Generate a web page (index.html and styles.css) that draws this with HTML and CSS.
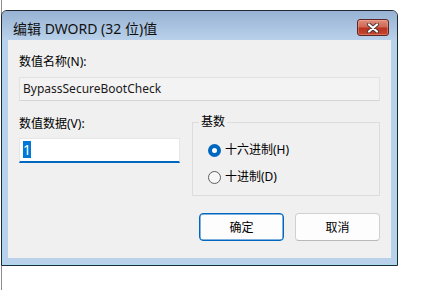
FILE: index.html
```html
<!DOCTYPE html>
<html lang="zh-CN">
<head>
<meta charset="utf-8">
<title>编辑 DWORD (32 位)值</title>
<link rel="stylesheet" href="styles.css">
</head>
<body>
<div class="desk">
  <div class="window">
    <div class="titlebar">
      <span class="title">编辑 DWORD (32 位)值</span>
      <button class="close" aria-label="关闭">
        <svg width="12" height="10" viewBox="0 0 12 10">
          <path d="M2 1.5 L10 8.5 M10 1.5 L2 8.5" stroke="#4a3434" stroke-width="4" stroke-linecap="round"/>
          <path d="M2 1.5 L10 8.5 M10 1.5 L2 8.5" stroke="#ffffff" stroke-width="2.2" stroke-linecap="round"/>
        </svg>
      </button>
    </div>
    <div class="client">
      <div class="label first">数值名称(N):</div>
      <div class="namebox">BypassSecureBootCheck</div>
      <div class="row">
        <div class="leftcol">
          <div class="label">数值数据(V):</div>
          <div class="valuebox"><span class="sel">1</span></div>
        </div>
        <fieldset class="group">
          <legend>基数</legend>
          <label class="radio"><span class="dot checked"></span>十六进制(H)</label>
          <label class="radio"><span class="dot"></span>十进制(D)</label>
        </fieldset>
      </div>
      <div class="buttons">
        <button class="btn primary">确定</button>
        <button class="btn">取消</button>
      </div>
    </div>
  </div>
</div>
</body>
</html>
```
FILE: styles.css
```css
html, body {
  margin: 0;
  padding: 0;
  background: #ffffff;
}
body {
  width: 444px;
  height: 290px;
  overflow: hidden;
  font-family: "Noto Sans", "Noto Sans CJK SC", sans-serif;
  font-size: 12px;
  color: #000;
}
.desk {
  height: 290px;
  margin-left: 1px;
  border-left: 1px solid #8c8c8c;
  padding-top: 10px;
  box-sizing: border-box;
}
.window {
  margin-left: -1px;
  width: 397px;
  height: 256px;
  box-sizing: border-box;
  border: 1px solid #1f2a33;
  border-radius: 6px 6px 0 0;
  background: #b9d1ea;
  box-shadow: inset 0 0 0 1px #a6dcef;
  padding: 0 6px 7px 6px;
  display: flex;
  flex-direction: column;
}
.titlebar {
  margin: 0 -6px;
  height: 29px;
  padding: 0 8px 0 11px;
  border-radius: 5px 5px 0 0;
  background: linear-gradient(#97b2d3, #b9d1ea);
  display: flex;
  align-items: flex-start;
  justify-content: space-between;
}
.title {
  font-size: 14px;
  line-height: 20px;
  padding-top: 8px;
  color: #111;
}
.close {
  margin-top: 8px;
  width: 32px;
  height: 17px;
  padding: 0;
  border: 1px solid #5e2424;
  border-radius: 3px;
  background: linear-gradient(#df8d7b 0%, #cf6652 48%, #b8321f 52%, #c4472f 100%);
  box-shadow: inset 0 0 0 1px rgba(255, 200, 185, 0.35);
  display: flex;
  align-items: center;
  justify-content: center;
}
.client {
  flex: 1;
  background: #f0f0f0;
  padding: 0 11px;
}
.label {
  line-height: 16px;
}
.label.first {
  margin-top: 14px;
}
.namebox {
  margin-top: 7px;
  height: 24px;
  box-sizing: border-box;
  border: 1px solid #e2e2e2;
  border-bottom-color: #d6d6d6;
  background: #f3f3f3;
  padding-left: 3px;
  line-height: 22px;
  color: #1a1a1a;
}
.row {
  display: flex;
  gap: 12px;
  margin-top: 13px;
}
.leftcol {
  width: 161px;
  padding-top: 2px;
}
.valuebox {
  margin-top: 6px;
  height: 25px;
  box-sizing: border-box;
  background: #ffffff;
  border: 1px solid #e6e6e6;
  border-bottom: 2px solid #0067c0;
  padding: 2px 0 0 3px;
}
.sel {
  display: inline-block;
  width: 8px;
  height: 17px;
  background: #0078d7;
  color: #ffffff;
  font-size: 14px;
  line-height: 17px;
  text-align: center;
}
.group {
  margin: 0;
  padding: 0;
  width: 188px;
  height: 82px;
  box-sizing: border-box;
  border: 1px solid #dcdcdc;
  min-width: 0;
}
.group legend {
  margin-left: 6px;
  padding: 0 2px;
  line-height: 16px;
}
.radio {
  display: flex;
  align-items: center;
  gap: 4px;
  height: 16px;
  line-height: 16px;
  margin-top: 12px;
  padding-left: 15px;
}
.radio + .radio {
  margin-top: 11px;
}
.dot {
  width: 13px;
  height: 13px;
  box-sizing: border-box;
  border-radius: 50%;
  border: 1px solid #5d5d5d;
  background: #f7f7f7;
}
.dot.checked {
  border: 4px solid #0067c0;
  background: #ffffff;
}
.buttons {
  display: flex;
  justify-content: flex-end;
  gap: 11px;
  margin-top: 17px;
}
.btn {
  width: 85px;
  height: 28px;
  box-sizing: border-box;
  border: 1px solid #d0d0d0;
  border-bottom-color: #b8b8b8;
  border-radius: 4px;
  background: #fdfdfd;
  font-family: "Noto Sans", "Noto Sans CJK SC", sans-serif;
  font-size: 12px;
  color: #000;
  padding: 0;
}
.btn.primary {
  border: 1px solid #0067c0;
  box-shadow: inset 0 0 0 0.5px #0067c0;
}
```
